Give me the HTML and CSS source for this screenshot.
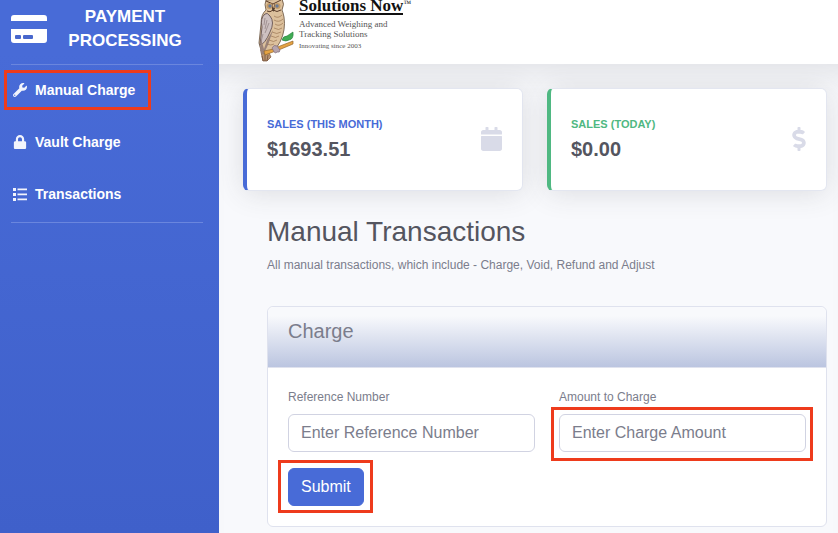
FILE: index.html
```html
<!DOCTYPE html>
<html lang="en">
<head>
<meta charset="utf-8">
<meta name="viewport" content="width=device-width, initial-scale=1">
<title>Payment Processing</title>
<link rel="stylesheet" href="styles.css">
</head>
<body>
<div class="app">
  <nav class="sidebar">
    <a class="brand" href="#">
      <svg class="brand-icon" viewBox="0 0 36 28" aria-hidden="true">
        <path fill="#fff" d="M3 0h30a3 3 0 0 1 3 3v3H0V3a3 3 0 0 1 3-3zM0 14h36v11a3 3 0 0 1-3 3H3a3 3 0 0 1-3-3z"/>
        <rect x="4" y="20" width="6" height="4" rx="1" fill="#4867cc"/>
        <rect x="12" y="20" width="10" height="4" rx="1" fill="#4867cc"/>
      </svg>
      <span class="brand-text">PAYMENT PROCESSING</span>
    </a>
    <ul class="nav-list">
      <li><a class="nav-link" href="#"><span class="nav-label marked">
        <svg class="nav-icon" viewBox="0 0 512 512" aria-hidden="true"><path d="M507.700 109.100c-2.200-9-13.500-12.100-20.100-5.500l-74.400 74.400-67.900-11.300L334 98.900l74.400-74.400c6.600-6.600 3.400-17.900-5.700-20.200-47.400-11.700-99.600.9-136.600 37.900-39.600 39.600-50.500 97.100-34.100 147.200L18.700 402.800c-25 25-25 65.500 0 90.500s65.500 25 90.500 0l213.200-213.200c50.100 16.700 107.500 5.700 147.400-34.200 37.100-37.100 49.700-89.300 37.900-136.800zM64 472c-13.200 0-24-10.700-24-24s10.700-24 24-24 24 10.700 24 24-10.700 24-24 24z"/></svg>
        Manual Charge</span></a></li>
      <li><a class="nav-link" href="#"><span class="nav-label">
        <svg class="nav-icon" viewBox="-32 0 512 512" aria-hidden="true"><path d="M400 224h-24v-72C376 68.200 307.800 0 224 0S72 68.200 72 152v72H48c-26.500 0-48 21.500-48 48v192c0 26.500 21.500 48 48 48h352c26.500 0 48-21.500 48-48V272c0-26.500-21.500-48-48-48zm-104 0H152v-72c0-39.700 32.300-72 72-72s72 32.300 72 72v72z"/></svg>
        Vault Charge</span></a></li>
      <li><a class="nav-link" href="#"><span class="nav-label">
        <svg class="nav-icon" viewBox="0 0 14 14" aria-hidden="true"><path d="M0 1h3v3H0zM0 6h3v3H0zM0 11h3v3H0zM4.500 1.500H14v1.800H4.500zM4.500 6.500H14v1.800H4.500zM4.500 11.500H14v1.800H4.500z"/></svg>
        Transactions</span></a></li>
    </ul>
  </nav>

  <div class="content">
    <header class="topbar">
      <svg class="owl" viewBox="0 0 36 64" aria-hidden="true">
        <path d="M3 52L9 49 13 57 9 61 5 61z" fill="#b99472" stroke="#75523b" stroke-width=".7"/>
        <path d="M8 0Q6 4 8 10Q3 14 3 24L1 43Q2 50 6 54Q18 51 22 42Q28 30 26 17Q25 12 24 10Q27 4 24-1z" fill="#dcc09c" stroke="#65503f" stroke-width=".8"/>
        <path d="M7 14Q2 18 4 27L2 45Q7 44 12 32Q17 22 12 16Q9 12 7 14z" fill="#cdc0c0" stroke="#655354" stroke-width=".9"/>
        <path d="M3 39l-1 12 3 4 5-10 5-15-6 10-3 9z" fill="#9a8279"/>
        <path d="M8 1l7 3 8-4M9 11q3 2 6-1 4 3 8 0M14 4l1 7 2-7" fill="none" stroke="#5b3d2b" stroke-width="1"/>
        <ellipse cx="11.500" cy="6" rx="3" ry="3" fill="#c49c68"/><ellipse cx="19.500" cy="6" rx="3" ry="3" fill="#c49c68"/>
        <circle cx="12" cy="6" r="1.700" fill="#697a99"/><circle cx="19" cy="6" r="1.700" fill="#697a99"/>
        <path d="M14 8h3l-1.500 4z" fill="#55402f"/>
        <path d="M16 16q4 3 8-1M16 20q5 3 9-1M17 24q4 3 8-1M16 28q5 3 8 0M14 32q5 3 9 0M13 36q5 3 8 0M11 40q5 3 8 0M9 44q4 2 7 0" fill="none" stroke="#9b7653" stroke-width=".7"/>
        <path d="M7 18l-1 7M9 20l-2 9M11 23l-4 10M5 34l-2 8" stroke="#8e7e80" stroke-width=".7"/>
        <path d="M6 51Q15 50 22 46L35 41 35 44 23 49 7 55z" fill="#e5a343" stroke="#94652b" stroke-width=".7"/>
        <path d="M14 48q2-4 5-2l3 4q0 3-3 2-1 2-3 0z" fill="#b5a4ad" stroke="#776270" stroke-width=".6"/>
        <path d="M24 40q1-4 5-4l6-4q1 7-4 8-3 2-7 0z" fill="#3fac54" stroke="#247a37" stroke-width=".6"/>
        <path d="M4 56l1 5M7 55l0 6M10 55l-1 6" stroke="#735139" stroke-width=".8"/>
      </svg>
      <div class="logo-text">
        <div class="logo-name"><span class="logo-under">Solutions Now</span><span class="logo-tm">™</span></div>
        <div class="logo-line">Advanced Weighing and<br>Tracking Solutions</div>
        <div class="logo-since">Innovating since 2003</div>
      </div>
    </header>

    <main class="main">
      <section class="stats">
        <div class="stat stat-month">
          <div>
            <div class="stat-title">SALES (THIS MONTH)</div>
            <div class="stat-value">$1693.51</div>
          </div>
          <svg class="stat-calendar" viewBox="0 0 448 512" aria-hidden="true"><path d="M12 192h424c6.600 0 12 5.400 12 12v260c0 26.500-21.500 48-48 48H48c-26.500 0-48-21.500-48-48V204c0-6.600 5.400-12 12-12zm436-44v-36c0-26.500-21.500-48-48-48h-48V12c0-6.600-5.400-12-12-12h-40c-6.600 0-12 5.400-12 12v52H160V12c0-6.600-5.400-12-12-12h-40c-6.600 0-12 5.400-12 12v52H48C21.500 64 0 85.500 0 112v36c0 6.600 5.400 12 12 12h424c6.600 0 12-5.400 12-12z"/></svg>
        </div>
        <div class="stat stat-today">
          <div>
            <div class="stat-title">SALES (TODAY)</div>
            <div class="stat-value">$0.00</div>
          </div>
          <svg class="stat-dollar" viewBox="0 0 288 512" aria-hidden="true"><path d="M209.200 233.400l-108-31.600C88.700 198.200 80 186.500 80 173.500c0-16.300 13.200-29.500 29.500-29.500h66.300c12.200 0 24.200 3.700 34.200 10.500 6.100 4.100 14.300 3.100 19.500-2l34.800-34c7.100-6.900 6.100-18.400-1.800-24.500C238 74.800 207.400 64.100 176 64V16c0-8.800-7.200-16-16-16h-32c-8.800 0-16 7.200-16 16v48h-2.500C45.800 64-5.400 118.700.5 183.600c4.200 46.100 39.400 83.600 83.800 96.600l102.500 30c12.500 3.700 21.200 15.300 21.200 28.300 0 16.300-13.200 29.500-29.500 29.500h-66.300C100 368 88 364.300 78 357.500c-6.100-4.100-14.300-3.100-19.500 2l-34.800 34c-7.100 6.900-6.100 18.400 1.800 24.500 24.500 19.200 55.100 29.900 86.500 30v48c0 8.800 7.200 16 16 16h32c8.800 0 16-7.200 16-16v-48.200c46.600-.9 90.300-28.600 105.700-72.700 21.500-61.600-14.600-124.800-72.500-141.700z"/></svg>
        </div>
      </section>

      <section class="transactions">
        <h1>Manual Transactions</h1>
        <p class="intro">All manual transactions, which include - Charge, Void, Refund and Adjust</p>
        <div class="card">
          <h2 class="card-header">Charge</h2>
          <form class="card-body">
            <div class="fields">
              <div class="field">
                <label for="reference">Reference Number</label>
                <input id="reference" type="text" placeholder="Enter Reference Number">
              </div>
              <div class="field">
                <label for="amount">Amount to Charge</label>
                <div class="marked marked-input"><input id="amount" type="text" placeholder="Enter Charge Amount"></div>
              </div>
            </div>
            <div class="marked marked-submit"><button type="button">Submit</button></div>
          </form>
        </div>
      </section>
    </main>
  </div>
</div>
</body>
</html>
```
FILE: styles.css
```css
* {
  box-sizing: border-box;
}

body {
  margin: 0;
  font-family: "Liberation Sans", Arial, sans-serif;
  font-size: 16px;
  line-height: 24px;
  color: #7b7d8c;
  background: #f8f9fc;
}

.app {
  display: flex;
  min-height: 100vh;
}

/* Sidebar */
.sidebar {
  flex: 0 0 219px;
  padding: 0 16px 0 11px;
  background: linear-gradient(180deg, #486bd7 0%, #486bd7 10%, #3f60ca 100%);
}

.brand {
  display: flex;
  align-items: center;
  gap: 12px;
  height: 65px;
  padding-bottom: 6px;
  border-bottom: 1px solid #6a86de;
  color: #fff;
  text-decoration: none;
}

.brand-icon {
  flex: none;
  width: 36px;
  height: 28px;
}

.brand-text {
  flex: 1;
  padding-right: 12px;
  font-size: 17px;
  font-weight: 700;
  text-align: center;
}

.nav-list {
  margin: 0;
  padding: 0 0 1px;
  list-style: none;
  border-bottom: 1px solid #6a86de;
}

.nav-link {
  display: flex;
  padding: 15px 0 17px;
  font-size: 14px;
  font-weight: 700;
  line-height: 20px;
  color: #fff;
  text-decoration: none;
}

.nav-label {
  display: flex;
  align-items: center;
  gap: 8px;
  padding-left: 2px;
}

.nav-icon {
  width: 14px;
  height: 14px;
  fill: #f2f4fc;
}

/* Red call-out frames drawn over the highlighted controls */
.marked {
  position: relative;
}

.marked::after {
  content: "";
  position: absolute;
  inset: -10px -16px -10px -9px;
  border: 3px solid #ee3b1c;
  pointer-events: none;
}

.nav-label.marked::after {
  left: -7px;
}

.marked-input::after {
  inset: -7px -7px -9px -8px;
}

.marked-submit {
  width: fit-content;
}

.marked-submit::after {
  inset: -8px -9px -7px -10px;
}

/* Top bar */
.content {
  flex: 1;
  min-width: 0;
}

.topbar {
  display: flex;
  gap: 5px;
  height: 64px;
  padding-left: 39px;
  background: #fff;
}

.owl {
  width: 36px;
  height: 64px;
}

.logo-text {
  font-family: "Liberation Serif", "Times New Roman", serif;
  color: #555;
}

.logo-name {
  display: flex;
  align-items: flex-start;
  height: 19px;
  color: #111;
}

.logo-under {
  height: 15px;
  border-bottom: 2px solid #111;
  font-size: 17px;
  font-weight: 700;
  line-height: 12px;
}

.logo-tm {
  font-size: 8px;
  line-height: 8px;
}

.logo-line {
  font-size: 9px;
  line-height: 10px;
}

.logo-since {
  margin-top: 2px;
  font-size: 7px;
  line-height: 10px;
}

/* Page */
.main {
  padding: 24px 11px 6px 24px;
  box-shadow: inset 0 28px 28px -20px rgba(58, 59, 69, 0.12);
}

.stats {
  display: grid;
  grid-template-columns: 1fr 1fr;
  gap: 24px;
}

.stat {
  display: flex;
  align-items: center;
  justify-content: space-between;
  min-height: 103px;
  padding: 0 20px 2px;
  background: #fff;
  border: 1px solid #e3e6f0;
  border-radius: 6px;
  box-shadow: 0 2px 28px rgba(58, 59, 69, 0.15);
}

.stat svg {
  height: 24px;
  fill: #d9dbe8;
}

.stat-calendar {
  width: 21px;
}

.stat-dollar {
  width: 14px;
}

.stat-month {
  border-left: 4px solid #486bd7;
}

.stat-today {
  border-left: 4px solid #4fb882;
}

.stat-title {
  margin-bottom: 5px;
  font-size: 11px;
  font-weight: 700;
  line-height: 16px;
}

.stat-month .stat-title {
  color: #486bd7;
}

.stat-today .stat-title {
  color: #4fb882;
}

.stat-value {
  font-size: 20px;
  font-weight: 700;
  color: #54555f;
}

.transactions {
  padding: 24px 0 0 24px;
}

h1 {
  margin: 0 0 7px;
  font-size: 28px;
  font-weight: 400;
  line-height: 34px;
  color: #54555f;
}

.intro {
  margin: 0 0 32px;
  font-size: 12px;
  line-height: 18px;
}

.card {
  background: #fff;
  border: 1px solid #dfe2ee;
  border-radius: 6px;
}

.card-header {
  margin: 0;
  padding: 12px 20px 24px;
  border-bottom: 1px solid #dfe2ee;
  border-radius: 6px 6px 0 0;
  background: linear-gradient(#f8f9fc 15%, #bbc5e0);
  font-size: 20px;
  font-weight: 400;
  line-height: 24px;
  color: #7b7d8c;
}

.card-body {
  padding: 20px;
}

.fields {
  display: grid;
  grid-template-columns: 1fr 1fr;
  gap: 24px;
  margin-bottom: 16px;
}

label {
  display: block;
  margin-bottom: 8px;
  font-size: 12px;
  line-height: 18px;
}

input {
  display: block;
  width: 100%;
  height: 38px;
  padding: 6px 12px;
  border: 1px solid #d1d3e2;
  border-radius: 6px;
  background: #fff;
  font: inherit;
  color: #6e707e;
}

input::placeholder {
  color: #7b7d8c;
  opacity: 1;
}

button {
  display: block;
  height: 38px;
  padding: 6px 12px;
  border: 1px solid #486bd7;
  border-radius: 6px;
  background: #486bd7;
  font: inherit;
  color: #fff;
}
```
